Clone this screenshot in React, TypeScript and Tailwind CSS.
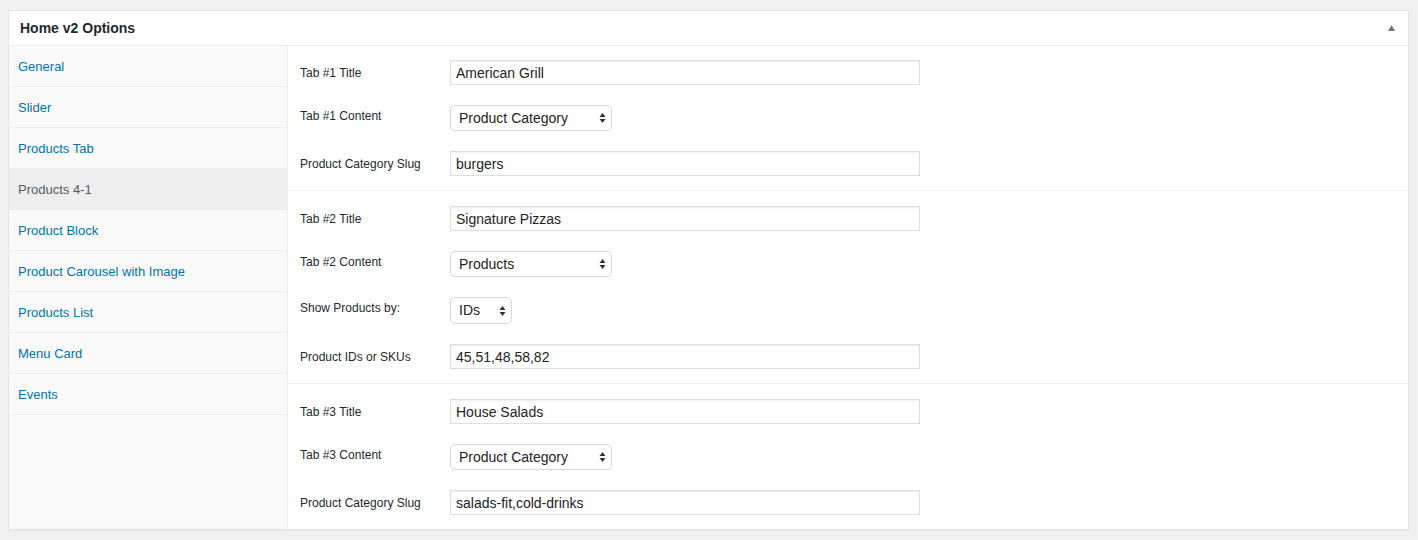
import type { ReactNode } from 'react';

const tabs = [
  'General',
  'Slider',
  'Products Tab',
  'Products 4-1',
  'Product Block',
  'Product Carousel with Image',
  'Products List',
  'Menu Card',
  'Events',
];

const active = 'Products 4-1';

function Row({ label, select, children }: { label: string; select?: boolean; children: ReactNode }) {
  return (
    <div className="flex items-start">
      <div
        className={`w-[150px] shrink-0 text-[12px] leading-[16px] text-[#23282d] ${select ? 'pt-[3px]' : 'pt-[5px]'}`}
      >
        {label}
      </div>
      {children}
    </div>
  );
}

function TextInput({ value }: { value: string }) {
  return (
    <input
      readOnly
      value={value}
      className="h-[25px] w-[470px] border border-[#dddddd] bg-white px-[5px] text-[14px] text-[#222] shadow-[inset_0_1px_2px_rgba(0,0,0,0.07)] outline-none"
    />
  );
}

function Select({ value, size }: { value: string; size: string }) {
  return (
    <div className={`relative ${size}`}>
      <select
        value={value}
        onChange={() => {}}
        className="h-full w-full appearance-none rounded-[5px] border border-[#d6d6d6] bg-white pl-[8px] text-[14px] text-[#222] outline-none"
      >
        <option>{value}</option>
      </select>
      <svg
        className="pointer-events-none absolute right-[6px] top-1/2 -translate-y-1/2"
        width="7"
        height="11"
        viewBox="0 0 7 11"
      >
        <path d="M3.5 0.5 L6.5 4.5 H0.5 Z" fill="#333" />
        <path d="M3.5 10.5 L6.5 6.5 H0.5 Z" fill="#333" />
      </svg>
    </div>
  );
}

export default function App() {
  return (
    <div
      className="min-h-[540px] bg-[#f1f1f1] pl-[8px] pr-[9px] pt-[10px]"
      style={{ fontFamily: '"Liberation Sans", Arial, sans-serif' }}
    >
      <div className="border border-[#e5e5e5] bg-white shadow-[0_1px_1px_rgba(0,0,0,0.04)]">
        <div className="flex h-[35px] items-center justify-between border-b border-[#eeeeee] pl-[11px] pr-[13px]">
          <h2 className="text-[14px] font-bold text-[#23282d]">Home v2 Options</h2>
          <svg width="7" height="6" viewBox="0 0 7 6">
            <path d="M3.5 0 L7 6 H0 Z" fill="#72777c" />
          </svg>
        </div>

        <div className="flex">
          <ul className="w-[279px] shrink-0 border-r border-[#eeeeee] bg-[#fafafa]">
            {tabs.map((t) => (
              <li
                key={t}
                className={`flex h-[41px] items-center border-b border-[#eeeeee] pl-[9px] pt-[2px] text-[13px] ${
                  t === active ? 'bg-[#eeeeee] text-[#555d66]' : 'text-[#0073aa]'
                }`}
              >
                {t}
              </li>
            ))}
          </ul>

          <div className="flex-1">
            <div className="flex flex-col gap-[20px] border-b border-[#eeeeee] px-[12px] pb-[14px] pt-[14px]">
              <Row label="Tab #1 Title">
                <TextInput value="American Grill" />
              </Row>
              <Row label="Tab #1 Content" select>
                <Select value="Product Category" size="h-[26px] w-[162px]" />
              </Row>
              <Row label="Product Category Slug">
                <TextInput value="burgers" />
              </Row>
            </div>

            <div className="flex flex-col gap-[20px] border-b border-[#eeeeee] px-[12px] pb-[14px] pt-[15px]">
              <Row label="Tab #2 Title">
                <TextInput value="Signature Pizzas" />
              </Row>
              <Row label="Tab #2 Content" select>
                <Select value="Products" size="h-[26px] w-[162px]" />
              </Row>
              <Row label="Show Products by:" select>
                <Select value="IDs" size="h-[27px] w-[62px]" />
              </Row>
              <Row label="Product IDs or SKUs">
                <TextInput value="45,51,48,58,82" />
              </Row>
            </div>

            <div className="flex flex-col gap-[20px] px-[12px] pb-[14px] pt-[15px]">
              <Row label="Tab #3 Title">
                <TextInput value="House Salads" />
              </Row>
              <Row label="Tab #3 Content" select>
                <Select value="Product Category" size="h-[26px] w-[162px]" />
              </Row>
              <Row label="Product Category Slug">
                <TextInput value="salads-fit,cold-drinks" />
              </Row>
            </div>
          </div>
        </div>
      </div>
    </div>
  );
}
